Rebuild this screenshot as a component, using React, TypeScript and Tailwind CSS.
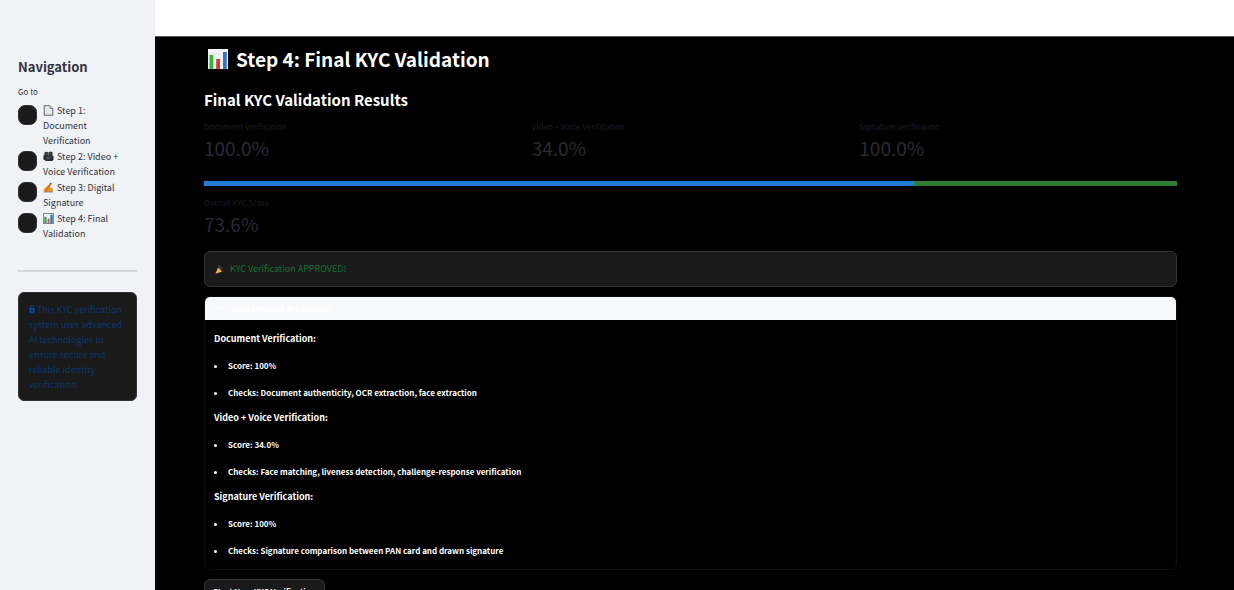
import React from "react";

type IconProps = { className?: string };

function ChartIcon({ className }: IconProps) {
  return (
    <svg viewBox="0 0 20 20" className={className} aria-hidden="true">
      <rect x="0" y="0" width="20" height="20" fill="#f3f5f7" />
      <path d="M0 5H20M0 10H20M0 15H20" stroke="#d3dde2" strokeWidth="0.7" />
      <rect x="1.5" y="6" width="3.8" height="14" fill="#35b53b" />
      <rect x="8.2" y="10" width="3.8" height="10" fill="#d63c2e" />
      <rect x="15" y="3" width="3.8" height="17" fill="#2b79c9" />
    </svg>
  );
}

function SmallChartIcon({ className }: IconProps) {
  return (
    <svg viewBox="0 0 20 20" className={className} aria-hidden="true">
      <rect x="0.8" y="0.8" width="18.4" height="18.4" fill="#eef2f4" stroke="#6f7d86" strokeWidth="1.6" />
      <rect x="2.5" y="7" width="4" height="11.5" fill="#3f9a46" />
      <rect x="8.3" y="10" width="3.6" height="8.5" fill="#b9604f" />
      <rect x="13.4" y="3" width="4.2" height="15.5" fill="#2f70ae" />
    </svg>
  );
}

function PageIcon({ className }: IconProps) {
  return (
    <svg viewBox="0 0 20 22" className={className} aria-hidden="true">
      <path d="M1.5 1.5H13L18.5 7V20.5H1.5Z" fill="#f4f4f2" stroke="#55595d" strokeWidth="1.9" />
      <path d="M13 1.5V7H18.5" fill="#d8dadb" stroke="#55595d" strokeWidth="1.4" />
      <path d="M4.5 7H10M4.5 10.5H15.5M4.5 13.5H15.5M4.5 16.8H15.5" stroke="#c2c6c9" strokeWidth="1" />
    </svg>
  );
}

function CameraIcon({ className }: IconProps) {
  return (
    <svg viewBox="0 0 24 22" className={className} aria-hidden="true">
      <circle cx="7.5" cy="5.5" r="5" fill="#34383b" />
      <circle cx="16.5" cy="5" r="4.7" fill="#2b2e31" />
      <path d="M1 8.5L5 8H20L23 10V18L20 21H6L3 18H1Z" fill="#2a2d30" />
      <circle cx="7.5" cy="5.5" r="1.8" fill="#5c6367" />
      <circle cx="16.5" cy="5" r="1.7" fill="#565d61" />
      <rect x="7" y="11.5" width="9" height="6" rx="1" fill="#464c50" />
      <path d="M1 10V17" stroke="#70777b" strokeWidth="1.4" />
    </svg>
  );
}

function WritingIcon({ className }: IconProps) {
  return (
    <svg viewBox="0 0 24 22" className={className} aria-hidden="true">
      <path d="M1 15.5L8 8L13 5L16 7L14.5 10.5L20 13.5L22.5 16.5L20 20.5H6L1 18Z" fill="#f6a51f" />
      <path d="M11 12L20 14M10 15.5L20.5 17" stroke="#c97612" strokeWidth="1.3" />
      <path d="M4 18.5L14.8 2L18.2 4.2L7 19.5Z" fill="#e06722" />
      <path d="M14.8 2L16.4 0.6L19.3 2.5L18.2 4.2Z" fill="#444a4f" />
      <path d="M1 20.7H22" stroke="#4b4744" strokeWidth="1.5" />
    </svg>
  );
}

function LockIcon({ className }: IconProps) {
  return (
    <svg viewBox="0 0 12 18" className={className} aria-hidden="true">
      <path d="M3 8V4.8A3 3 0 0 1 9 4.8V8" fill="none" stroke="#0d4690" strokeWidth="2" />
      <rect x="0.5" y="7" width="11" height="10.5" rx="1" fill="#0d4690" />
      <path d="M6 10.5V14.2" stroke="#1a1b20" strokeWidth="1.8" />
    </svg>
  );
}

function PartyIcon({ className }: IconProps) {
  return (
    <svg viewBox="0 0 20 20" className={className} aria-hidden="true">
      <path d="M1 19.5L6.5 6Q12.5 8.5 15 15Z" fill="#f0b43c" />
      <path d="M6.5 6Q12.5 6.5 15 15Q9.5 12.5 6.5 6Z" fill="#b97a28" />
      <path d="M9 6Q10.5 3.5 8.7 1" fill="none" stroke="#3fa0d8" strokeWidth="1.6" />
      <path d="M12.5 9L17 4.5" stroke="#8d7627" strokeWidth="1.3" />
      <path d="M15 12Q17 10.5 19 12" fill="none" stroke="#8f342c" strokeWidth="1.3" />
      <circle cx="13.5" cy="3" r="1.1" fill="#a3352e" />
    </svg>
  );
}

const steps = [
  { id: "step-1", label: "Step 1: Document Verification", Icon: PageIcon },
  { id: "step-2", label: "Step 2: Video + Voice Verification", Icon: CameraIcon },
  { id: "step-3", label: "Step 3: Digital Signature", Icon: WritingIcon },
  { id: "step-4", label: "Step 4: Final Validation", Icon: SmallChartIcon },
];

const metrics = [
  { label: "Document Verification", value: "100.0%" },
  { label: "Video + Voice Verification", value: "34.0%" },
  { label: "Signature Verification", value: "100.0%" },
];

const sections = [
  {
    title: "Document Verification:",
    items: ["Score: 100%", "Checks: Document authenticity, OCR extraction, face extraction"],
  },
  {
    title: "Video + Voice Verification:",
    items: ["Score: 34.0%", "Checks: Face matching, liveness detection, challenge-response verification"],
  },
  {
    title: "Signature Verification:",
    items: ["Score: 100%", "Checks: Signature comparison between PAN card and drawn signature"],
  },
];

function Metric({ label, value }: { label: string; value: string }) {
  return (
    <div>
      <div className="text-[8px] leading-4 text-[#1d1e24]">{label}</div>
      <div className="text-[19px] leading-[26px] text-[#2a2b33]">{value}</div>
    </div>
  );
}

function Sidebar() {
  return (
    <aside className="w-[155px] shrink-0 bg-[#f0f2f6] px-[18px] pt-[55px] text-[#31333f]">
      <h2 className="text-[13px] font-bold leading-6">Navigation</h2>
      <fieldset className="mt-[5px]">
        <legend className="text-[8px] leading-4">Go to</legend>
        <div className="mt-[3px] flex flex-col gap-px pr-3">
          {steps.map(({ id, label, Icon }) => (
            <label key={id} htmlFor={id} className="flex items-start gap-[6px]">
              <input
                id={id}
                type="radio"
                name="step"
                defaultChecked={id === "step-4"}
                className="mt-[2px] h-5 w-[19px] shrink-0 appearance-none rounded-[7px] border border-[#333333] bg-[#1a1a1a]"
              />
              <span className="text-[9px] leading-[15px]">
                <Icon className="mr-[3px] inline-block h-[11px] w-[11px] align-[-2px]" />
                {label}
              </span>
            </label>
          ))}
        </div>
      </fieldset>
      <hr className="mt-[29px] border-t-2 border-[#d5d7dd]" />
      <div className="mt-5 rounded-md border border-[#333333] bg-[#1a1a1a] px-[10px] pb-2 pt-[9px] text-[9px] leading-[15px] text-[#0a376e]">
        <LockIcon className="mr-[2px] inline-block h-[10px] w-[6px] align-[-1px]" />
        This KYC verification system uses advanced AI technologies to ensure secure and reliable identity verification.
      </div>
    </aside>
  );
}

export default function App() {
  return (
    <div className="flex h-screen overflow-hidden bg-black font-['Noto_Sans_CJK_JP','Noto_Sans',sans-serif]">
      <Sidebar />
      <div className="min-w-0 flex-1">
        <header className="box-content h-9 border-b border-[#555555] bg-white" />
        <main className="pl-[49px] pr-[57px] pt-2 text-white">
          <h1 className="flex items-center gap-2 pl-1 text-[19px] font-bold leading-7">
            <ChartIcon className="size-5" />
            Step 4: Final KYC Validation
          </h1>
          <h2 className="mt-[15px] text-[15px] font-bold leading-6">Final KYC Validation Results</h2>
          <div className="mt-[7px] grid grid-cols-3 gap-[10px]">
            {metrics.map((m) => (
              <Metric key={m.label} {...m} />
            ))}
          </div>
          <div
            role="progressbar"
            aria-label="Overall score"
            aria-valuenow={73}
            className="mt-5 h-[5px] bg-[#2e7d32]"
          >
            <div className="h-full w-[73%] bg-[#1f7bd6]" />
          </div>
          <div className="mt-[9px]">
            <Metric label="Overall KYC Score" value="73.6%" />
          </div>
          <div
            role="status"
            className="mt-[14px] flex items-center gap-[6px] rounded-md border border-[#333333] bg-[#1a1a1a] px-[10px] py-[9px] text-[9px] leading-4 text-[#177233]"
          >
            <PartyIcon className="size-[9px]" />
            KYC Verification APPROVED!
          </div>
          <details open className="mt-[9px] rounded-md border border-[#0e0e10]">
            <summary className="flex h-[23px] list-none items-center gap-2 rounded-t-[5px] bg-[#f8f9fb] px-[10px] text-[8px] font-bold text-white">
              <svg viewBox="0 0 10 10" className="size-2" aria-hidden="true">
                <path d="M1 3L5 7L9 3" fill="none" stroke="white" strokeWidth="1.5" />
              </svg>
              View Detailed Breakdown
            </summary>
            <div className="px-[9px] pb-[10px] pt-[11px] text-[8px] font-bold leading-4">
              {sections.map((s) => (
                <section key={s.title} className="mb-[9px] last:mb-0">
                  <h3 className="text-[9px]">{s.title}</h3>
                  <ul className="mt-[11px] flex flex-col gap-[11px]">
                    {s.items.map((item) => (
                      <li
                        key={item}
                        className="flex items-center gap-[11px] before:size-[3px] before:rounded-full before:bg-white"
                      >
                        {item}
                      </li>
                    ))}
                  </ul>
                </section>
              ))}
            </div>
          </details>
          <button
            type="button"
            className="mt-[9px] rounded-md border border-[#333333] bg-[#1a1a1a] px-2 py-1 text-[8px] font-bold leading-4 text-white"
          >
            Start New KYC Verification
          </button>
        </main>
      </div>
    </div>
  );
}
